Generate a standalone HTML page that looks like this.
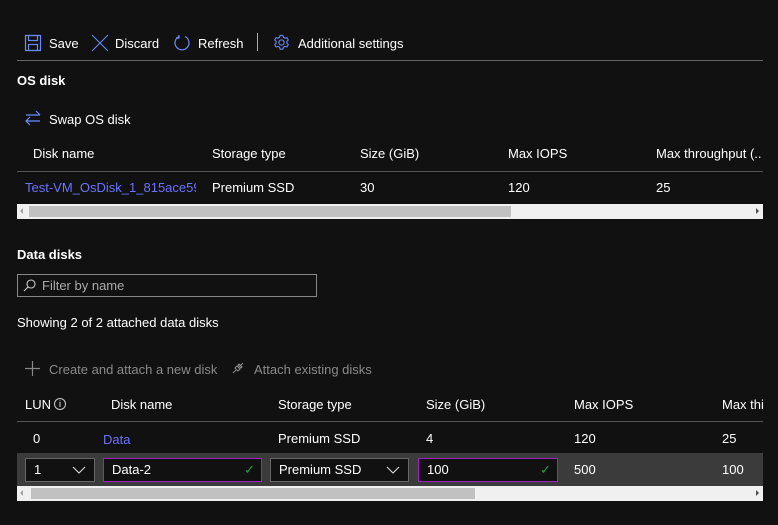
<!DOCTYPE html>
<html><head><style>
*{margin:0;padding:0;box-sizing:border-box}
body{width:778px;height:525px;background:#111;color:#fff;font-family:"Liberation Sans",sans-serif;font-size:13px;position:relative;overflow:hidden}
.a{position:absolute;white-space:nowrap}
.b{font-weight:bold}
.lnk{color:#6b73ff}
.dim{color:#8a8a8a}
.hr{position:absolute;height:1px;background:#555}
.sb{position:absolute;left:17px;width:746px;height:15px;background:#f0f0f0}
.sb .t{position:absolute;top:2px;height:11px;background:#c1c1c1}
.sb .l{position:absolute;left:3px;top:4px;width:0;height:0;border-top:3px solid transparent;border-bottom:3px solid transparent;border-right:3px solid #a0a0a0}
.sb .r{position:absolute;right:4px;top:4px;width:0;height:0;border-top:3px solid transparent;border-bottom:3px solid transparent;border-left:3px solid #505050}
.inp{position:absolute;top:458px;height:24px;background:#111;border:1px solid #666;padding:3px 8px;font-size:13px}
.pur{border-color:#a020c0}
.chk{position:absolute;right:6px;top:3px;color:#2ea043}
.chev{position:absolute;right:8px;top:7px}
</style></head><body>
<svg class="a" style="left:24px;top:34px" width="18" height="18" viewBox="0 0 18 18" fill="none" stroke="#6b8cff" stroke-width="1.2"><rect x="1.5" y="1.5" width="15" height="15"/><rect x="4.5" y="1.5" width="9" height="5"/><rect x="4.5" y="10.5" width="9" height="6"/></svg>
<div class="a" style="left:49px;top:36px">Save</div>
<svg class="a" style="left:91px;top:34px" width="18" height="18" viewBox="0 0 18 18" stroke="#6b8cff" stroke-width="1"><path d="M1 1L17 17M17 1L1 17"/></svg>
<div class="a" style="left:115px;top:36px">Discard</div>
<svg class="a" style="left:173px;top:34px" width="18" height="18" viewBox="0 0 18 18" fill="none" stroke="#6b8cff" stroke-width="1.2"><path d="M6 2.5A7 7 0 1 0 12 2.5"/><path d="M6 1V4H3"/></svg>
<div class="a" style="left:198px;top:36px">Refresh</div>
<div class="a" style="left:257px;top:33px;width:1px;height:18px;background:#aaa"></div>
<svg class="a" style="left:273px;top:34px" width="17" height="17" viewBox="0 0 18 18" fill="none" stroke="#6b8cff" stroke-width="1.1"><circle cx="9" cy="9" r="2.8"/><path d="M7.5 1.5h3l.5 2 1.7 1 2-.7 1.5 2.6-1.5 1.4v2l1.5 1.4-1.5 2.6-2-.7-1.7 1-.5 2h-3l-.5-2-1.7-1-2 .7-1.5-2.6 1.5-1.4v-2L1.8 6.4l1.5-2.6 2 .7 1.7-1z"/></svg>
<div class="a" style="left:298px;top:36px">Additional settings</div>
<div class="hr" style="left:17px;top:60px;width:746px;background:#666"></div>
<div class="a b" style="left:17px;top:73px">OS disk</div>
<svg class="a" style="left:25px;top:110px" width="16" height="16" viewBox="0 0 16 16" fill="none" stroke="#6b8cff" stroke-width="1.2"><path d="M1 5H15M11 1L15 5M15 11H1M5 7L1 11L5 15"/></svg>
<div class="a" style="left:49px;top:112px">Swap OS disk</div>
<div class="a" style="left:33px;top:146px">Disk name</div>
<div class="a" style="left:212px;top:146px">Storage type</div>
<div class="a" style="left:360px;top:146px">Size (GiB)</div>
<div class="a" style="left:508px;top:146px">Max IOPS</div>
<div class="a" style="left:656px;top:146px">Max throughput (..</div>
<div class="hr" style="left:17px;top:171px;width:746px"></div>
<div class="a lnk" style="left:25px;top:180px;width:171px;overflow:hidden">Test-VM_OsDisk_1_815ace590</div>
<div class="a" style="left:212px;top:180px">Premium SSD</div>
<div class="a" style="left:360px;top:180px">30</div>
<div class="a" style="left:508px;top:180px">120</div>
<div class="a" style="left:656px;top:180px">25</div>
<div class="sb" style="top:204px"><div class="l"></div><div class="t" style="left:12px;width:482px"></div><div class="r"></div></div>
<div class="a b" style="left:17px;top:247px">Data disks</div>
<div class="a" style="left:17px;top:274px;width:300px;height:23px;border:1px solid #888"></div>
<svg class="a" style="left:23px;top:279px" width="13" height="13" viewBox="0 0 13 13" fill="none" stroke="#ccc" stroke-width="1.1"><circle cx="8" cy="5" r="4"/><path d="M5 8L1 12"/></svg>
<div class="a" style="left:42px;top:278px;color:#aaa">Filter by name</div>
<div class="a" style="left:17px;top:315px">Showing 2 of 2 attached data disks</div>
<svg class="a dim" style="left:25px;top:361px" width="15" height="15" viewBox="0 0 15 15" stroke="#888" stroke-width="1.2"><path d="M7.5 0V15M0 7.5H15"/></svg>
<div class="a dim" style="left:49px;top:362px">Create and attach a new disk</div>
<svg class="a" style="left:230px;top:360px" width="16" height="16" viewBox="0 0 16 16" fill="none" stroke="#888" stroke-width="1.1"><path d="M3 13L6 10M10 6L13 3M5 8l3 3 2-2-3-3zM8 5l3 3 1-1-3-3z"/></svg>
<div class="a dim" style="left:254px;top:362px">Attach existing disks</div>
<div class="a" style="left:25px;top:397px">LUN</div>
<div class="a" style="left:54px;top:398px;width:12px;height:12px;border:1px solid #ccc;border-radius:50%;font-size:9px;text-align:center;line-height:10px">i</div>
<div class="a" style="left:111px;top:397px">Disk name</div>
<div class="a" style="left:278px;top:397px">Storage type</div>
<div class="a" style="left:426px;top:397px">Size (GiB)</div>
<div class="a" style="left:574px;top:397px">Max IOPS</div>
<div class="a" style="left:722px;top:397px">Max thi</div>
<div class="hr" style="left:17px;top:421px;width:746px"></div>
<div class="a" style="left:33px;top:431px">0</div>
<div class="a lnk" style="left:103px;top:432px">Data</div>
<div class="a" style="left:278px;top:431px">Premium SSD</div>
<div class="a" style="left:426px;top:431px">4</div>
<div class="a" style="left:574px;top:431px">120</div>
<div class="a" style="left:722px;top:431px">25</div>
<div class="a" style="left:17px;top:453px;width:746px;height:33px;background:#3b3b3b"></div>
<div class="inp" style="left:25px;width:70px">1<svg class="chev" width="14" height="8" viewBox="0 0 14 8" fill="none" stroke="#ddd" stroke-width="1.1"><path d="M1 1L7 7L13 1"/></svg></div>
<div class="inp pur" style="left:103px;width:159px">Data-2<span class="chk">&#10003;</span></div>
<div class="inp" style="left:270px;width:139px">Premium SSD<svg class="chev" width="14" height="8" viewBox="0 0 14 8" fill="none" stroke="#ddd" stroke-width="1.1"><path d="M1 1L7 7L13 1"/></svg></div>
<div class="inp pur" style="left:418px;width:140px">100<span class="chk">&#10003;</span></div>
<div class="a" style="left:574px;top:462px">500</div>
<div class="a" style="left:722px;top:462px">100</div>
<div class="sb" style="top:486px"><div class="l"></div><div class="t" style="left:14px;width:444px"></div><div class="r"></div></div>
</body></html>
